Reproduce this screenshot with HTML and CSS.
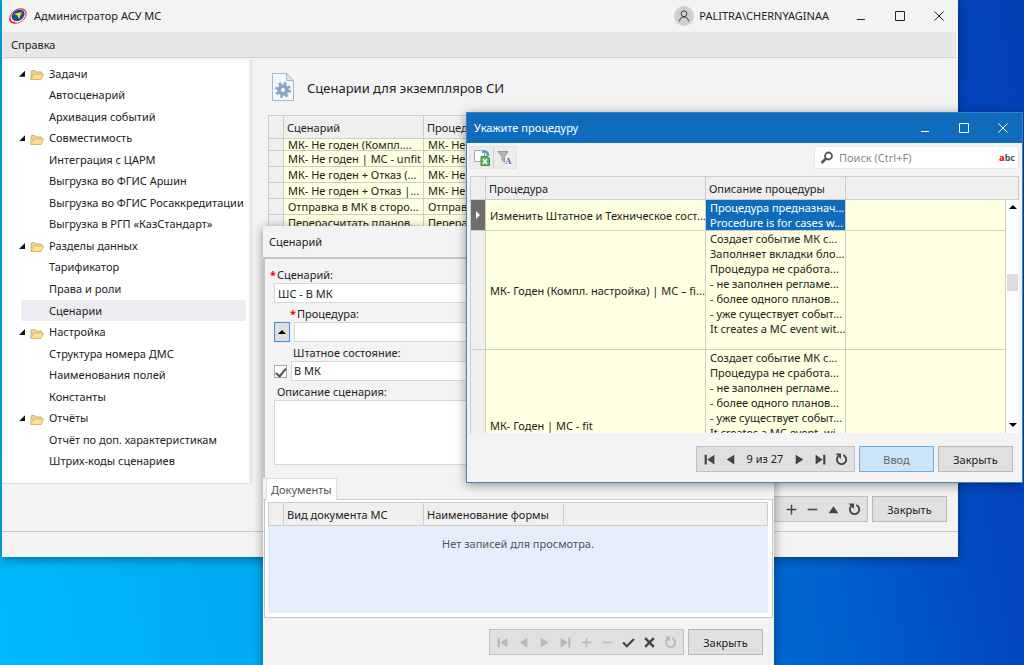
FILE: index.html
```html
<!DOCTYPE html>
<html lang="ru">
<head>
    <meta charset="UTF-8">
    <meta name="viewport" content="width=device-width, initial-scale=1.0">
    <title>Администратор АСУ МС</title>
    <link rel="stylesheet" href="styles.css">
</head>
<body>
    <svg class="sprite" aria-hidden="true">
        <symbol id="folder" viewBox="0 0 14 12">
            <path d="M1 10.500V2.500Q1 1.500 2 1.500H5L6 3H11.500V5" fill="#f0d49c" stroke="#d3b078"/>
            <path d="M1 10.500L3.500 5H13.500L11 10.500Z" fill="#ffdf94" stroke="#dcb468"/>
        </symbol>
        <symbol id="first" viewBox="0 0 12 12"><path d="M1.500 1.500H3.500V10.500H1.500ZM10.500 1.500V10.500L4 6Z"/></symbol>
        <symbol id="prev" viewBox="0 0 12 12"><path d="M9.500 1.500V10.500L2.500 6Z"/></symbol>
        <symbol id="next" viewBox="0 0 12 12"><path d="M2.500 1.500V10.500L9.500 6Z"/></symbol>
        <symbol id="last" viewBox="0 0 12 12"><path d="M8.500 1.500H10.500V10.500H8.500ZM1.500 1.500V10.500L8 6Z"/></symbol>
        <symbol id="plus" viewBox="0 0 12 12"><path d="M5.300 1.500H6.700V5.300H10.500V6.700H6.700V10.500H5.300V6.700H1.500V5.300H5.300Z"/></symbol>
        <symbol id="minus" viewBox="0 0 12 12"><path d="M1.500 5.300H10.500V6.700H1.500Z"/></symbol>
        <symbol id="up" viewBox="0 0 12 12"><path d="M6 3L10.500 9.500H1.500Z"/></symbol>
        <symbol id="check" viewBox="0 0 12 12"><path d="M1 6L4.500 9.500L11 2.800" fill="none" stroke="currentColor" stroke-width="2"/></symbol>
        <symbol id="cross" viewBox="0 0 12 12"><path d="M2 2L10 10M10 2L2 10" fill="none" stroke="currentColor" stroke-width="2.200"/></symbol>
        <symbol id="reload" viewBox="0 0 12 12">
            <path d="M7.600 2A4.300 4.300 0 1 1 3 3" fill="none" stroke="currentColor" stroke-width="1.700"/>
            <path d="M.5.500H5.500V5.500Z"/>
        </symbol>
    </svg>

    <div class="desktop">
        <!-- главное окно -->
        <div class="window main-window">
            <div class="title-bar">
                <svg class="logo" viewBox="0 0 20 18">
                    <ellipse cx="10" cy="9" rx="9.500" ry="6.800" transform="rotate(-35 10 9)" fill="#e32227"/>
                    <ellipse cx="10" cy="9" rx="8.200" ry="6" transform="rotate(-35 10 9)" fill="#fff"/>
                    <ellipse cx="10.500" cy="8.500" rx="7" ry="5.300" transform="rotate(-35 10 9)" fill="#1c4b9c"/>
                    <path d="M2 12Q2 16 7 15.500" fill="none" stroke="#e32227" stroke-width="1.600"/>
                    <path d="M6 7L14 5L11 12L9.500 8.500Z" fill="#f4e61a"/>
                </svg>
                <span class="title">Администратор АСУ МС</span>
                <div class="user">
                    <svg class="avatar" viewBox="0 0 20 20">
                        <circle cx="10" cy="10" r="10" fill="#cfcfcf"/>
                        <circle cx="10" cy="7.800" r="2.900" fill="none" stroke="#444"/>
                        <path d="M5.500 15.500Q5.800 11 10 11T14.500 15.500" fill="none" stroke="#444"/>
                    </svg>
                    <span>PALITRA\CHERNYAGINAA</span>
                </div>
                <div class="window-buttons">
                    <button aria-label="Свернуть"><svg viewBox="0 0 12 12"><path d="M2 9.500H10"/></svg></button>
                    <button aria-label="Развернуть"><svg viewBox="0 0 12 12"><path d="M1.500 1.500H10.500V10.500H1.500Z"/></svg></button>
                    <button aria-label="Закрыть окно"><svg viewBox="0 0 12 12"><path d="M1.500 1.500L10.500 10.500M10.500 1.500L1.500 10.500"/></svg></button>
                </div>
            </div>
            <nav class="menu-bar"><button>Справка</button></nav>
            <div class="workspace">
                <div class="sidebar">
                    <ul class="tree">
                        <li class="folder"><svg><use href="#folder"/></svg>Задачи</li>
                        <li>Автосценарий</li>
                        <li>Архивация событий</li>
                        <li class="folder"><svg><use href="#folder"/></svg>Совместимость</li>
                        <li>Интеграция с ЦАРМ</li>
                        <li>Выгрузка во ФГИС Аршин</li>
                        <li>Выгрузка во ФГИС Росаккредитации</li>
                        <li>Выгрузка в РГП «КазСтандарт»</li>
                        <li class="folder"><svg><use href="#folder"/></svg>Разделы данных</li>
                        <li>Тарификатор</li>
                        <li>Права и роли</li>
                        <li class="selected">Сценарии</li>
                        <li class="folder"><svg><use href="#folder"/></svg>Настройка</li>
                        <li>Структура номера ДМС</li>
                        <li>Наименования полей</li>
                        <li>Константы</li>
                        <li class="folder"><svg><use href="#folder"/></svg>Отчёты</li>
                        <li>Отчёт по доп. характеристикам</li>
                        <li>Штрих-коды сценариев</li>
                    </ul>
                </div>
                <div class="content">
                    <div class="heading">
                        <svg viewBox="0 0 22 28">
                            <path d="M.5.500H14.500L21.500 7.500V27.500H.5Z" fill="#f4f8fd" stroke="#a9b9cc"/>
                            <path d="M14.500.500V7.500H21.500Z" fill="#dce6f2" stroke="#a9b9cc"/>
                            <circle cx="11" cy="17" r="6.500" fill="none" stroke="#8aa3c8" stroke-width="3" stroke-dasharray="2.550 2.550"/>
                            <circle cx="11" cy="17" r="4" fill="#b6cae6" stroke="#8aa3c8" stroke-width="3.500"/>
                            <circle cx="11" cy="17" r="1.800" fill="#f4f8fd"/>
                        </svg>
                        <h1>Сценарии для экземпляров СИ</h1>
                    </div>
                    <div class="grid-box">
                        <table class="grid scenarios">
                            <colgroup><col class="mark"><col class="narrow"><col></colgroup>
                            <thead><tr><th></th><th>Сценарий</th><th>Процедура</th></tr></thead>
                            <tbody>
                                <tr class="cut"><td></td><td>МК- Не годен (Компл....</td><td>МК- Не</td></tr>
                                <tr><td></td><td>МК- Не годен | MC - unfit</td><td>МК- Не</td></tr>
                                <tr><td></td><td>МК- Не годен + Отказ (...</td><td>МК- Не</td></tr>
                                <tr><td></td><td>МК- Не годен + Отказ |...</td><td>МК- Не</td></tr>
                                <tr><td></td><td>Отправка в МК в сторо...</td><td>Отправ</td></tr>
                                <tr><td></td><td>Перерасчитать планов...</td><td>Перера</td></tr>
                            </tbody>
                        </table>
                    </div>
                    <div class="actions">
                        <div class="navigator">
                            <button aria-label="Добавить"><svg><use href="#plus"/></svg></button>
                            <button aria-label="Удалить"><svg><use href="#minus"/></svg></button>
                            <button aria-label="Изменить"><svg><use href="#up"/></svg></button>
                            <button aria-label="Обновить"><svg><use href="#reload"/></svg></button>
                        </div>
                        <button class="btn">Закрыть</button>
                    </div>
                </div>
            </div>
            <div class="status-bar"></div>
        </div>

        <!-- карточка сценария -->
        <div class="window card-window">
            <div class="title-bar"><span class="title">Сценарий</span></div>
            <form class="card-form">
                <label class="required" for="name">Сценарий:</label>
                <input class="field" id="name" type="text" value="ШС - В МК">
                <label class="required inset" for="procedure">Процедура:</label>
                <div class="field-row">
                    <button class="pick" type="button" aria-label="Выбрать процедуру"><svg viewBox="0 0 8 8"><path d="M4 2L8 6H0Z"/></svg></button>
                    <input class="field" id="procedure" type="text">
                </div>
                <label class="inset" for="state">Штатное состояние:</label>
                <div class="field-row tight">
                    <input class="tick" type="checkbox" aria-label="Использовать штатное состояние" checked>
                    <input class="field" id="state" type="text" value="В МК">
                </div>
                <label for="about">Описание сценария:</label>
                <textarea class="field" id="about"></textarea>
            </form>
            <div class="tabs"><button class="tab">Документы</button></div>
            <div class="tab-page">
                <div class="documents">
                    <table class="grid">
                        <colgroup><col class="mark"><col class="narrow"><col class="narrow"><col></colgroup>
                        <thead><tr><th></th><th>Вид документа МС</th><th>Наименование формы</th><th></th></tr></thead>
                    </table>
                    <p class="empty">Нет записей для просмотра.</p>
                </div>
            </div>
            <div class="actions">
                <div class="navigator">
                    <button aria-label="Первая" disabled><svg><use href="#first"/></svg></button>
                    <button aria-label="Предыдущая" disabled><svg><use href="#prev"/></svg></button>
                    <button aria-label="Следующая" disabled><svg><use href="#next"/></svg></button>
                    <button aria-label="Последняя" disabled><svg><use href="#last"/></svg></button>
                    <button aria-label="Добавить" disabled><svg><use href="#plus"/></svg></button>
                    <button aria-label="Удалить" disabled><svg><use href="#minus"/></svg></button>
                    <button aria-label="Сохранить"><svg><use href="#check"/></svg></button>
                    <button aria-label="Отменить"><svg><use href="#cross"/></svg></button>
                    <button aria-label="Обновить" disabled><svg><use href="#reload"/></svg></button>
                </div>
                <button class="btn">Закрыть</button>
            </div>
        </div>

        <!-- выбор процедуры -->
        <div class="window picker-window">
            <div class="title-bar">
                <span class="title">Укажите процедуру</span>
                <div class="window-buttons">
                    <button aria-label="Свернуть"><svg viewBox="0 0 12 12"><path d="M2 9.500H10"/></svg></button>
                    <button aria-label="Развернуть"><svg viewBox="0 0 12 12"><path d="M1.500 1.500H10.500V10.500H1.500Z"/></svg></button>
                    <button aria-label="Закрыть окно"><svg viewBox="0 0 12 12"><path d="M1.500 1.500L10.500 10.500M10.500 1.500L1.500 10.500"/></svg></button>
                </div>
            </div>
            <div class="tools">
                <div class="tool-buttons">
                    <button aria-label="Экспорт в Excel">
                        <svg viewBox="0 0 16 16">
                            <path d="M.5.500H7.500L10.500 3.500V11.500H.5Z" fill="#fff" stroke="#9aa9bb"/>
                            <path d="M8 1.500H11Q14 2 14 6" fill="none" stroke="#6c93d0" stroke-width="2.500"/>
                            <path d="M7 6.500H13.500L15.500 8.500V15.500H7Z" fill="#5cb264" stroke="#3c9146"/>
                            <path d="M9 9L13 14M13 9L9 14" stroke="#fff" stroke-width="1.500"/>
                        </svg>
                    </button>
                    <button aria-label="Автофильтр">
                        <svg viewBox="0 0 16 16">
                            <path d="M1 1.500H11L7.500 6.500V12L5 10V6.500Z" fill="#b5b5b5" stroke="#999"/>
                            <text x="8" y="14" class="letter">A</text>
                        </svg>
                    </button>
                </div>
                <div class="search">
                    <svg viewBox="0 0 14 14"><circle cx="8.500" cy="5" r="3.500" fill="none" stroke="#555" stroke-width="1.800"/><path d="M6 7.500L1.500 12" stroke="#555" stroke-width="2.500"/></svg>
                    <input type="search" placeholder="Поиск (Ctrl+F)" aria-label="Поиск">
                    <span class="abc"><b>a</b>bc</span>
                </div>
            </div>
            <div class="picker-grid">
                <table class="grid">
                    <colgroup><col class="mark"><col class="wide"><col class="narrow"><col><col class="bar"></colgroup>
                    <thead><tr><th></th><th>Процедура</th><th>Описание процедуры</th><th colspan="2"></th></tr></thead>
                    <tbody>
                        <tr class="current">
                            <td><svg viewBox="0 0 6 10"><path d="M1 1L5 5L1 9Z"/></svg></td>
                            <td>Изменить Штатное и Техническое сост...</td>
                            <td class="lines">Процедура предназнач...<br>Procedure is for cases w...</td>
                            <td></td><td></td>
                        </tr>
                        <tr class="eight">
                            <td></td>
                            <td>МК- Годен (Компл. настройка) | MC – fi...</td>
                            <td class="lines">Создает событие МК с...<br>Заполняет вкладки бло...<br>Процедура не сработа...<br>- не заполнен регламе...<br>- более одного планов...<br>- уже существует событ...<br>It creates a MC event wit...</td>
                            <td></td><td></td>
                        </tr>
                        <tr class="ten">
                            <td></td>
                            <td>МК- Годен | MC - fit</td>
                            <td class="lines">Создает событие МК с...<br>Процедура не сработа...<br>- не заполнен регламе...<br>- более одного планов...<br>- уже существует событ...<br>It creates a MC event, wi...</td>
                            <td></td><td></td>
                        </tr>
                    </tbody>
                </table>
                <div class="scrollbar">
                    <svg viewBox="0 0 8 8"><path d="M4 2L8 6H0Z"/></svg>
                    <span class="thumb"></span>
                    <svg viewBox="0 0 8 8"><path d="M4 6L8 2H0Z"/></svg>
                </div>
            </div>
            <div class="actions">
                <div class="navigator">
                    <button aria-label="Первая"><svg><use href="#first"/></svg></button>
                    <button aria-label="Предыдущая"><svg><use href="#prev"/></svg></button>
                    <span class="position">9 из 27</span>
                    <button aria-label="Следующая"><svg><use href="#next"/></svg></button>
                    <button aria-label="Последняя"><svg><use href="#last"/></svg></button>
                    <button aria-label="Обновить"><svg><use href="#reload"/></svg></button>
                </div>
                <button class="btn primary">Ввод</button>
                <button class="btn">Закрыть</button>
            </div>
        </div>
    </div>
</body>
</html>
```

FILE: styles.css
```css
* {
    box-sizing: border-box;
}

body {
    margin: 0;
    font-family: "Noto Sans", "Open Sans", sans-serif;
    font-size: 11px;
    line-height: 16px;
    color: #222;
}

button,
input,
textarea {
    font: inherit;
    color: inherit;
}

button {
    border: 0;
    padding: 0;
    background: none;
}

.sprite {
    display: none;
}

.desktop {
    position: relative;
    height: 100vh;
    min-height: 600px;
    overflow: hidden;
    background: linear-gradient(80deg, #00b8fb 0%, #00a8f2 28%, #0078dc 55%, #0061cf 74%, #0346c0 90%, #0340b4 100%);
}

/* окна */
.window {
    position: absolute;
    display: flex;
    flex-direction: column;
    background: #f3f3f3;
    box-shadow: 0 2px 10px rgba(0, 0, 0, 0.4);
}

.main-window {
    top: 0;
    left: 2px;
    right: 66px;
    bottom: 108px;
}

.card-window {
    top: 226px;
    left: 263px;
    right: 250px;
    bottom: -8px;
}

.picker-window {
    top: 112px;
    left: 466px;
    right: 1px;
    bottom: 182px;
    border: 1px solid #3c86c8;
}

.title-bar {
    display: flex;
    align-items: center;
    flex: none;
    height: 32px;
    padding-left: 6px;
}

.title {
    flex: 1;
}

.logo {
    width: 20px;
    height: 18px;
    margin-right: 6px;
}

.user {
    display: flex;
    align-items: center;
    gap: 5px;
    margin-right: 12px;
}

.avatar {
    width: 20px;
    height: 20px;
}

.window-buttons {
    display: flex;
}

.window-buttons button {
    width: 39px;
    height: 30px;
}

.window-buttons svg {
    display: block;
    width: 12px;
    height: 12px;
    margin: 0 auto;
    fill: none;
    stroke: currentColor;
}

.menu-bar {
    flex: none;
    height: 26px;
    margin: 0 2px 2px 1px;
    padding-left: 8px;
    background: #e7e7e7;
    border-bottom: 1px solid #cfcfcf;
}

.menu-bar button {
    height: 26px;
}

.workspace {
    display: flex;
    flex: 1;
    min-height: 0;
}

.status-bar {
    flex: none;
    height: 26px;
    border-top: 1px solid #c8c8c8;
}

/* дерево */
.sidebar {
    display: flex;
    width: 251px;
    margin-bottom: 47px;
    border-right: 4px solid #eaeaea;
}

.tree {
    flex: 1;
    display: grid;
    grid-auto-rows: 1fr;
    margin: 0;
    padding: 3px 3px 11px 19px;
    list-style: none;
    background: #fff;
    border-bottom: 1px solid #ddd;
}

.tree li {
    display: flex;
    align-items: center;
    padding-left: 28px;
    white-space: nowrap;
    border-radius: 2px;
}

.tree .folder {
    gap: 5px;
    padding-left: 0;
}

.tree .folder::before {
    content: "";
    width: 6px;
    height: 6px;
    margin-left: -2px;
    background: #111;
    clip-path: polygon(100% 0, 100% 100%, 0 100%);
}

.tree svg {
    width: 14px;
    height: 12px;
    margin-top: 3px;
}

.tree .selected {
    background: #edecf1;
}

/* список сценариев */
.content {
    display: flex;
    flex-direction: column;
    flex: 1;
    min-width: 0;
    padding: 13px 11px 9px 15px;
}

.heading {
    display: flex;
    align-items: center;
    gap: 13px;
    padding-left: 4px;
    margin-bottom: 14px;
}

.heading svg {
    width: 22px;
    height: 28px;
}

.heading h1 {
    margin: 0;
    font-size: 13px;
    font-weight: normal;
    line-height: 30px;
    height: 28px;
}

.grid-box {
    flex: 1;
    min-height: 0;
    overflow: hidden;
}

.grid {
    width: 100%;
    table-layout: fixed;
    border-collapse: collapse;
    border-top: 1px solid #c8cac0;
}

.grid .mark {
    width: 15px;
}

.grid .narrow {
    width: 140px;
}

.grid .wide {
    width: 220px;
}

.grid .bar {
    width: 13px;
}

.grid th {
    height: 23px;
    padding: 2px 0 0 3px;
    font-weight: normal;
    text-align: left;
    background: #efefef;
    border: 1px solid #ccccc8;
}

.grid td {
    height: 16px;
    padding: 0 0 0 4px;
    line-height: 15px;
    white-space: nowrap;
    overflow: hidden;
    background: #ffffe1;
    border: 1px solid #ccccc8;
}

.grid td:first-child {
    background: #efefef;
}

.grid .cut td {
    height: 12px;
    line-height: 11px;
}

.actions {
    display: flex;
    justify-content: flex-end;
    gap: 4px;
}

.navigator {
    display: flex;
    align-items: center;
    height: 26px;
    padding: 0 2px;
    background: #e0e0e0;
    border: 1px solid #c0c0c4;
}

.navigator button {
    width: 21px;
    height: 24px;
    color: #444;
}

.navigator button:disabled {
    color: #b8b8b8;
}

.navigator svg {
    display: block;
    width: 13px;
    height: 13px;
    margin: 0 auto;
    fill: currentColor;
}

.main-window .navigator {
    padding-left: 8px;
}

.position {
    width: 48px;
    text-align: center;
}

.btn {
    width: 75px;
    height: 26px;
    padding-top: 2px;
    background: #e0e0e0;
    border: 1px solid #b8b8b8;
}

.btn.primary {
    color: #666;
    background: #cce4f7;
    border-color: #66aeea;
}

/* карточка */
.card-window .title-bar {
    height: 31px;
}

.card-form {
    display: flex;
    flex-direction: column;
    height: 221px;
    padding: 8px 12px 0 9px;
    border-top: 2px solid #c6c6ca;
    border-left: 2px solid #c6c6ca;
}

.card-form label {
    position: relative;
    flex: none;
    height: 16px;
    margin-left: 3px;
}

.card-form .inset {
    margin-left: 19px;
}

.card-form .required.inset {
    margin-left: 23px;
}

.required::before {
    content: "*";
    position: absolute;
    left: -7px;
    color: #e00;
    font-weight: bold;
}

.field {
    width: 100%;
    height: 20px;
    flex: none;
    margin-bottom: 3px;
    padding: 0 3px;
    background: #fff;
    border: 1px solid #d8d8d8;
    border-radius: 0;
}

textarea.field {
    height: 65px;
    resize: none;
}

.field-row {
    display: flex;
    gap: 4px;
}

.field-row .field {
    flex: 1;
}

.field-row.tight .field {
    padding: 0 2px 2px;
}

.pick {
    width: 16px;
    height: 20px;
    background: #e0e0e0;
    border: 1px solid #3c8fd8;
}

.pick svg {
    display: block;
    width: 8px;
    height: 8px;
    margin: 0 auto;
}

.tick {
    appearance: none;
    width: 13px;
    height: 13px;
    margin: 4px 0 0;
    background: #fff;
    border: 1px solid #aaa;
}

.tick:checked::after {
    content: "";
    display: block;
    width: 4px;
    height: 9px;
    margin: 0 auto;
    border: solid #555;
    border-width: 0 2px 2px 0;
    transform: rotate(40deg);
}

.tabs {
    flex: none;
    height: 22px;
    padding-left: 3px;
    border-bottom: 1px solid #ccc;
}

.tab {
    height: 22px;
    padding: 0 4px;
    color: #555;
    background: #fff;
    border: 1px solid #ddd;
    border-bottom: 0;
}

.tab-page {
    display: flex;
    flex: 1;
    padding: 2px 4px 4px 3px;
    margin: 0 1px;
    background: #fff;
    border: 1px solid #c4c4c8;
    border-top: 0;
}

.documents {
    flex: 1;
    background: #e4eefa;
}

.empty {
    margin: 10px 0 0;
    text-align: center;
    color: #555;
}

.card-window .actions {
    padding: 11px 11px 18px 0;
}

/* выбор процедуры */
.picker-window .title-bar {
    height: 30px;
    padding-left: 7px;
    color: #fff;
    background: #0f6cbd;
}

.tools {
    display: flex;
    justify-content: space-between;
    flex: none;
    padding: 3px 3px 7px 2px;
}

.tool-buttons {
    display: flex;
    height: 23px;
    background: #ececec;
    border: 1px solid #e4e4e4;
}

.tool-buttons button {
    width: 23px;
}

.tool-buttons button + button {
    border-left: 1px solid #d0d0d0;
}

.tool-buttons svg {
    display: block;
    width: 16px;
    height: 16px;
    margin: 0 auto;
}

.letter {
    font: bold 9px "Liberation Serif", serif;
    fill: #5673a8;
}

.search {
    display: flex;
    align-items: center;
    gap: 5px;
    width: 205px;
    height: 23px;
    padding: 0 3px 0 5px;
    background: #fff;
    border: 1px solid #e8e8e8;
    border-radius: 3px;
}

.search svg {
    width: 14px;
    height: 14px;
}

.search input {
    flex: 1;
    min-width: 0;
    padding: 0;
    border: 0;
    outline: 0;
    background: none;
}

.search input::placeholder {
    color: #8a8a8a;
}

.abc {
    color: #555;
    font-size: 9px;
    font-weight: bold;
}

.abc b {
    color: #d22;
}

.picker-grid {
    position: relative;
    flex: 1;
    min-height: 0;
    margin: 0 3px;
    overflow: hidden;
}

.picker-grid td:last-child {
    background: #fff;
    border-color: #fff;
}

.picker-grid .current td {
    height: 31px;
}

.picker-grid .eight td {
    height: 119px;
}

.picker-grid .ten td {
    height: 152px;
}

.picker-grid td.lines {
    vertical-align: top;
}

.current td:first-child {
    padding: 0 0 0 4px;
    background: #6e6e6e;
}

.current td:first-child svg {
    display: block;
    width: 6px;
    height: 10px;
    fill: #fff;
}

.current td.lines {
    color: #fff;
    background: #0f6cbd;
}

.scrollbar {
    position: absolute;
    top: 24px;
    right: 0;
    bottom: 0;
    width: 13px;
    display: flex;
    flex-direction: column;
    align-items: center;
    justify-content: space-between;
    padding: 3px 0 4px;
    background: #fff;
}

.scrollbar svg {
    width: 8px;
    height: 8px;
}

.thumb {
    width: 11px;
    height: 17px;
    margin-bottom: 68px;
    background: #dcdcdc;
}

.picker-window .actions {
    padding: 13px 9px 10px 0;
}
```
